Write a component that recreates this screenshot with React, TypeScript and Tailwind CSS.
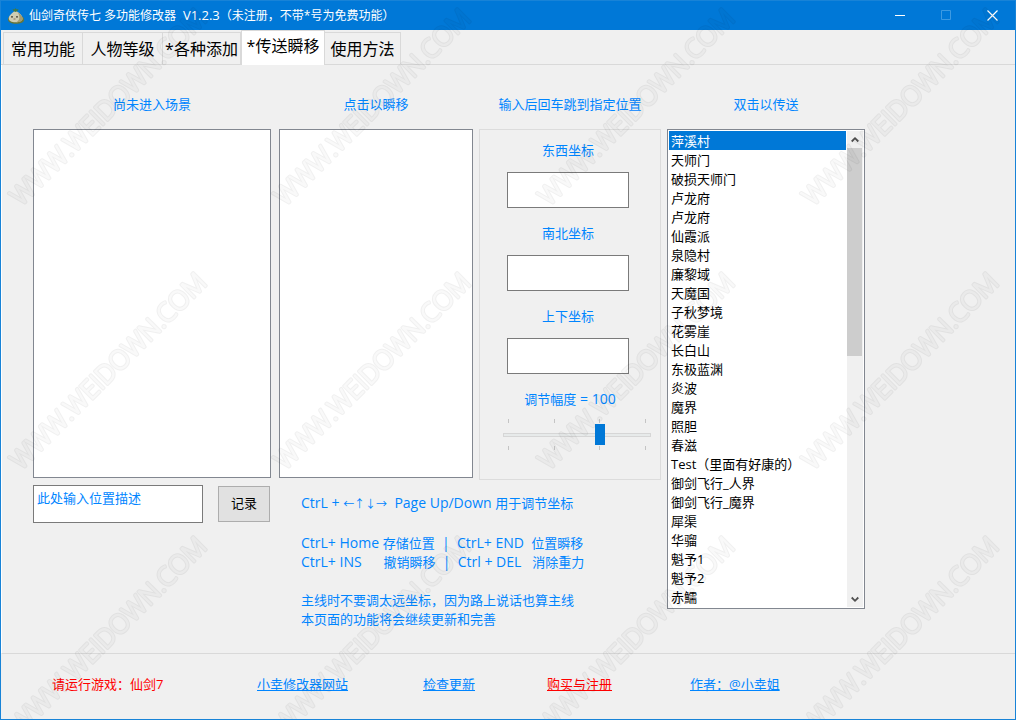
import { useState } from 'react';
import type { ReactNode } from 'react';

const TABS = [
    { label: '常用功能', width: 'w-20' },
    { label: '人物等级', width: 'w-20' },
    { label: '*各种添加', width: 'w-[78px]' },
    { label: '*传送瞬移', width: 'w-[84px]' },
    { label: '使用方法', width: 'w-[76px]' },
];

const PLACES = [
    '萍溪村', '天师门', '破损天师门', '卢龙府', '卢龙府', '仙霞派', '泉隐村', '廉黎域', '天魔国',
    '子秋梦境', '花雾崖', '长白山', '东极蓝渊', '炎波', '魔界', '照胆', '春滋', 'Test（里面有好康的）',
    '御剑飞行_人界', '御剑飞行_魔界', '犀渠', '华骝', '魁予1', '魁予2', '赤鱬',
];

const AXES = [
    { id: 'axis-ew', label: '东西坐标' },
    { id: 'axis-ns', label: '南北坐标' },
    { id: 'axis-ud', label: '上下坐标' },
];

const WATERMARK_X = [20, 284, 548, 812];
const WATERMARK_Y = [206, 470, 734];

function AppIcon() {
    return (
        <svg viewBox="0 0 16 16" className="h-4 w-4" aria-hidden="true">
            <path d="M0 11.500C0 9.500 1 8.500 3 8h10c2 .5 3 2 3 4s-3 3.800-8 3.800S0 14 0 11.500z" fill="#66763a" />
            <path d="M7.500 2.500C10 4 14.500 7 14.500 10.500c0 2.700-3 3.700-7 3.700S.8 13 .8 10.200C.8 7 5 4.500 7.500 2.500z" fill="#cfccb2" />
            <path d="M9.500 4c3 2 5.500 4.500 5 7.500-.5 2-3 2.800-6 2.700 3.500-2 3.800-6 1-10.200z" fill="#a39c72" />
            <path d="M5.500 3L4.500 1l2 .5L7.500 0l1 1.500 2-.5L9.500 3l-2 1z" fill="#3f7a45" />
            <circle cx="4" cy="8.800" r=".9" fill="#3a352c" />
            <circle cx="9" cy="8.800" r=".9" fill="#3a352c" />
            <path d="M5.500 11h2" stroke="#7c5a44" strokeWidth=".8" />
        </svg>
    );
}

function TitleBar() {
    return (
        <header className="flex h-[29px] items-center bg-[#0078d7] pl-[7px] text-xs text-white">
            <AppIcon />
            <h1 className="ml-[5px] flex-1 whitespace-pre">
                仙剑奇侠传七 多功能修改器<span className="text-[13px]">  V1.2.3</span>（未注册，不带*号为免费功能）
            </h1>
            <div className="flex h-full">
                <button type="button" aria-label="最小化" className="flex w-[46px] items-center justify-center">
                    <svg className="h-[11px] w-[11px]" viewBox="0 0 11 11"><path d="M0 5.500h10" stroke="#fff" /></svg>
                </button>
                <button type="button" aria-label="最大化" disabled className="flex w-[46px] items-center justify-center">
                    <svg className="h-[11px] w-[11px]" viewBox="0 0 11 11"><path d="M.5.5h9v9h-9z" fill="none" stroke="#3d9ae2" /></svg>
                </button>
                <button type="button" aria-label="关闭" className="flex w-[46px] items-center justify-center">
                    <svg className="h-[11px] w-[11px]" viewBox="0 0 11 11"><path d="M.5.5l10 10M10.500.5l-10 10" stroke="#fff" strokeWidth="1.200" /></svg>
                </button>
            </div>
        </header>
    );
}

function TabBar({ active, onSelect }: { active: number; onSelect: (index: number) => void }) {
    return (
        <nav role="tablist" className="flex h-[35px] items-end border-b border-[#d9d9d9] pl-0.5 text-base text-black">
            {TABS.map((tab, index) => (
                <button
                    key={tab.label}
                    type="button"
                    role="tab"
                    aria-selected={index === active}
                    onClick={() => onSelect(index)}
                    className={`flex items-center justify-center border border-b-0 border-[#d9d9d9] whitespace-nowrap ${tab.width} ${
                        index === active ? '-mb-px h-[35px] bg-white pb-1' : 'h-8 border-l-0 first:border-l'
                    }`}
                >
                    {tab.label}
                </button>
            ))}
        </nav>
    );
}

function EmptyList({ id, label }: { id: string; label: string }) {
    return (
        <div className="flex flex-col">
            <label htmlFor={id} className="mb-[15px] h-5 text-center leading-5">{label}</label>
            <select id={id} size={2} className="h-[349px] w-full appearance-none rounded-none border border-[#828790] bg-white" />
        </div>
    );
}

function CoordinatePanel() {
    const [step, setStep] = useState(100);

    return (
        <section className="flex flex-col">
            <h2 className="mb-[15px] h-5 text-center leading-5">输入后回车跳到指定位置</h2>
            <div className="h-[351px] border border-[#dcdcdc] pt-2.5">
                {AXES.map((axis) => (
                    <div key={axis.id} className="mb-[15px] flex flex-col gap-3 pr-[31px] pl-[27px]">
                        <label htmlFor={axis.id} className="h-5 text-center leading-5">{axis.label}</label>
                        <input id={axis.id} type="text" className="h-9 w-full border border-[#7a7a7a] bg-white px-1" />
                    </div>
                ))}
                <label htmlFor="step" className="block h-5 text-center leading-5">调节幅度<Latin> = {step}</Latin></label>
                <div className="mt-2.5 pr-[9px] pl-[23px]">
                    <Ticks />
                    <input
                        id="step"
                        type="range"
                        min={0}
                        max={150}
                        step={50}
                        value={step}
                        onChange={(e) => setStep(Number(e.target.value))}
                        className="my-px block h-[21px] w-full appearance-none bg-transparent [&::-webkit-slider-runnable-track]:h-1 [&::-webkit-slider-runnable-track]:border [&::-webkit-slider-runnable-track]:border-[#d6d6d6] [&::-webkit-slider-runnable-track]:bg-[#e7eaea] [&::-webkit-slider-thumb]:-mt-[10px] [&::-webkit-slider-thumb]:h-[21px] [&::-webkit-slider-thumb]:w-2.5 [&::-webkit-slider-thumb]:appearance-none [&::-webkit-slider-thumb]:bg-[#0078d7]"
                    />
                    <Ticks />
                </div>
            </div>
        </section>
    );
}

function Ticks() {
    return (
        <div className="flex justify-between px-[5px]">
            {[0, 1, 2, 3].map((n) => (
                <span key={n} className="h-1 w-px bg-[#c4c4c4]" />
            ))}
        </div>
    );
}

function PlaceList() {
    return (
        <div className="flex flex-col">
            <label htmlFor="places" className="mb-[15px] h-5 text-center leading-5">双击以传送</label>
            <div className="flex border border-[#828790] bg-white p-px">
                <select
                    id="places"
                    size={25}
                    defaultValue="0"
                    className="h-[476px] min-w-0 flex-1 appearance-none overflow-hidden rounded-none border-0 bg-white p-0 text-black"
                >
                    {PLACES.map((place, index) => (
                        <option
                            key={index}
                            value={index}
                            className="h-[19px] min-h-0 px-0.5 py-0 leading-[19px] checked:bg-[#0078d7] checked:bg-linear-to-r checked:from-[#0078d7] checked:to-[#0078d7] checked:text-white"
                        >
                            {place}
                        </option>
                    ))}
                </select>
                <div className="ml-px flex w-4 flex-col bg-[#f0f0f0] pr-px">
                    <button type="button" aria-label="向上滚动" className="flex h-[17px] items-center justify-center">
                        <svg className="h-2 w-2" viewBox="0 0 8 8"><path d="M.7 5.500L4 2.200l3.300 3.300" fill="none" stroke="#505050" strokeWidth="1.800" /></svg>
                    </button>
                    <div className="h-[208px] bg-[#cdcdcd]" />
                    <div className="flex-1" />
                    <button type="button" aria-label="向下滚动" className="flex h-[17px] items-center justify-center">
                        <svg className="h-2 w-2" viewBox="0 0 8 8"><path d="M.7 2.500L4 5.800l3.300-3.300" fill="none" stroke="#505050" strokeWidth="1.800" /></svg>
                    </button>
                </div>
            </div>
        </div>
    );
}

// key names are set one size above the Chinese text
function Latin({ children }: { children: ReactNode }) {
    return <span className="text-[14px] leading-none">{children}</span>;
}

function RecordRow() {
    return (
        <div className="flex items-start pt-[5px]">
            <textarea
                aria-label="位置描述"
                defaultValue="此处输入位置描述"
                className="h-[38px] w-[170px] resize-none overflow-hidden border border-[#7a7a7a] bg-white px-[3px] py-0.5 leading-5"
            />
            <button type="button" className="mt-px ml-[15px] h-9 w-[52px] border border-[#adadad] bg-[#e1e1e1] text-black">
                记录
            </button>
            <div className="ml-[31px] pt-[9px] leading-[19px] whitespace-pre">
                <p><Latin>CtrL + </Latin><span className="text-[11px] leading-none">←↑↓→</span><Latin>  Page Up/Down </Latin>用于调节坐标</p>
                <p className="mt-[21px]"><Latin>CtrL+ Home </Latin>存储位置<Latin>  |  CtrL+ END  </Latin>位置瞬移</p>
                <p><Latin>CtrL+ INS      </Latin>撤销瞬移<Latin>  |  Ctrl + DEL   </Latin>消除重力</p>
                <p className="mt-[19px]">主线时不要调太远坐标，因为路上说话也算主线</p>
                <p>本页面的功能将会继续更新和完善</p>
            </div>
        </div>
    );
}

function Footer() {
    return (
        <footer className="grid h-[65px] grid-cols-[205fr_166fr_124fr_143fr_325fr] items-center pb-1 pl-[51px]">
            <p className="text-[#ff0000]">请运行游戏：仙剑7</p>
            <div><a href="#site" className="underline">小幸修改器网站</a></div>
            <div><a href="#update" className="underline">检查更新</a></div>
            <div><a href="#buy" className="text-[#ff0000] underline">购买与注册</a></div>
            <div><a href="#author" className="underline">作者：@小幸姐</a></div>
        </footer>
    );
}

function Watermark() {
    return (
        <svg className="pointer-events-none absolute inset-0 h-full w-full" aria-hidden="true">
            <mask id="rings" maskUnits="userSpaceOnUse" x="0" y="0" width="100%" height="100%">
                <g fontFamily="'Open Sans', sans-serif" fontSize="26" fontWeight="300" fill="none" strokeLinejoin="round">
                    {WATERMARK_Y.map((y) =>
                        WATERMARK_X.map((x) => (
                            <g key={`${x}-${y}`} transform={`translate(${x} ${y}) rotate(-45)`}>
                                <text stroke="#fff" strokeWidth="3">WWW.WEIDOWN.COM</text>
                                <text stroke="#666" fill="#666" strokeWidth="1">WWW.WEIDOWN.COM</text>
                            </g>
                        )),
                    )}
                </g>
            </mask>
            <rect width="100%" height="100%" fillOpacity=".06" mask="url(#rings)" />
        </svg>
    );
}

export default function App() {
    const [tab, setTab] = useState(3);

    return (
        <div className="relative flex min-h-screen flex-col overflow-hidden border border-[#1883d7] bg-[#f0f0f0] font-['Open_Sans','Noto_Sans_CJK_SC',sans-serif] text-[13px] text-[#0085ff]">
            <TitleBar />
            <TabBar active={tab} onSelect={setTab} />
            <main className="flex-1 border-b border-l border-[#d9d9d9] border-l-white pt-[29px] pr-[150px] pl-[31px]">
                <div className="grid grid-cols-[628fr_198fr] items-start gap-1.5">
                    <div>
                        <div className="grid grid-cols-[440fr_182fr] gap-1.5">
                            <div className="grid grid-cols-[238fr_194fr] gap-2">
                                <EmptyList id="scene" label="尚未进入场景" />
                                <EmptyList id="jump" label="点击以瞬移" />
                            </div>
                            <CoordinatePanel />
                        </div>
                        <RecordRow />
                    </div>
                    <PlaceList />
                </div>
            </main>
            <Footer />
            <Watermark />
        </div>
    );
}
